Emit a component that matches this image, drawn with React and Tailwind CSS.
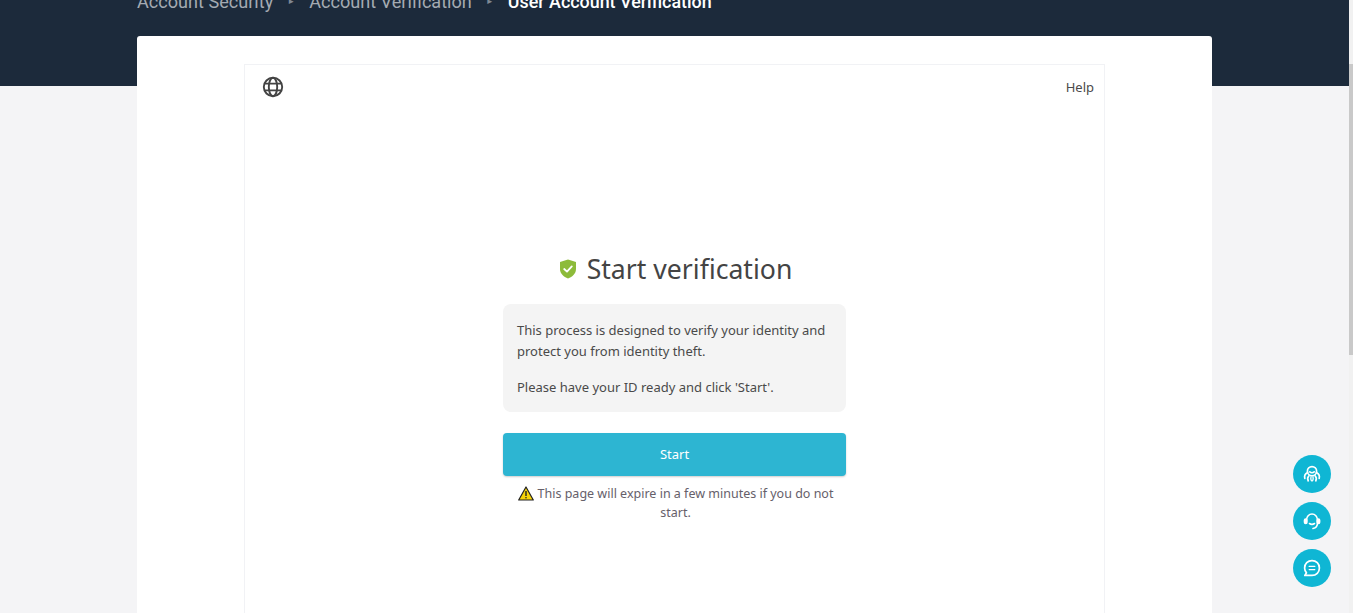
function GlobeIcon() {
  return (
    <svg width="22" height="22" viewBox="0 0 22 22" fill="none" stroke="#444" strokeWidth="1.9">
      <circle cx="11" cy="11" r="9.2" />
      <ellipse cx="11" cy="11" rx="4.2" ry="9.2" />
      <path d="M2.6 7.6 H19.4 M2.6 14.4 H19.4" />
    </svg>
  );
}

function ShieldIcon() {
  return (
    <svg width="18" height="20" viewBox="0 0 18 20">
      <path d="M9 0.5 L17 3 V10 C17 14.5 13.5 17.8 9 19.5 C4.5 17.8 1 14.5 1 10 V3 Z" fill="#8dbb3a" />
      <path d="M5.2 10 L8 12.6 L12.8 7.4" fill="none" stroke="#fff" strokeWidth="1.8" strokeLinecap="round" strokeLinejoin="round" />
    </svg>
  );
}

function WarningIcon() {
  return (
    <svg width="16" height="15" viewBox="0 0 16 15">
      <path d="M8 1 L15.3 14 H0.7 Z" fill="#f7d308" stroke="#222" strokeWidth="1.2" strokeLinejoin="round" />
      <path d="M8 5 V10" stroke="#222" strokeWidth="1.4" />
      <circle cx="8" cy="11.8" r="0.8" fill="#222" />
    </svg>
  );
}

function RoundButton({ children }) {
  return (
    <button className="flex h-[38px] w-[38px] items-center justify-center rounded-full bg-[#0fb6d4]">
      {children}
    </button>
  );
}

export default function App() {
  return (
    <div className="relative h-[613px] overflow-hidden bg-[#f4f4f6] font-['Noto_Sans',sans-serif]">
      <header className="h-[86px] overflow-hidden bg-[#1c2a3b] pl-[137px]">
        <nav className="-mt-[10px] flex items-center font-['Roboto',sans-serif] text-[18.1px] leading-6 text-[#a4aab2]">
          <span>Account Security</span>
          <span className="mx-[14px] text-[8px] text-[#7f8893]">►</span>
          <span>Account Verification</span>
          <span className="mx-[14px] text-[8px] text-[#7f8893]">►</span>
          <span className="text-[17.9px] font-medium text-white">User Account Verification</span>
        </nav>
      </header>

      <main className="-mt-[50px] ml-[137px] h-[600px] w-[1075px] rounded-t-[3px] bg-white px-[107px] pt-[28px]">
        <section className="h-[600px] border border-[#f1f2f5] px-[10px]">
          <div className="flex h-[44px] items-center justify-between pl-[7px]">
            <GlobeIcon />
            <a className="pt-[2px] text-[13px] text-[#4a4a4a]">Help</a>
          </div>

          <div className="mx-auto mt-[141px] w-[343px]">
            <h1 className="flex items-center justify-center gap-[10px] pl-[2px] text-[26.6px] leading-[38px] text-[#444]">
              <ShieldIcon />
              Start verification
            </h1>
            <div className="mt-[16px] rounded-lg bg-[#f4f4f4] px-[14px] pb-[14px] pt-[16px] text-[13px] leading-[21px] text-[#4a4a4a]">
              <p>This process is designed to verify your identity and protect you from identity theft.</p>
              <p className="mt-[15px]">Please have your ID ready and click 'Start'.</p>
            </div>
            <button className="mt-[21px] h-[43px] w-full rounded bg-[#2db5d2] pt-[1px] text-[13px] text-white shadow-[0_1px_2px_rgba(0,0,0,0.2)]">
              Start
            </button>
            <p className="mx-auto mt-[8px] w-[320px] pl-[2px] text-center text-[12.5px] leading-[19px] text-[#66606a]">
              <span className="mr-[4px] inline-block align-[-3px]"><WarningIcon /></span>
              This page will expire in a few minutes if you do not start.
            </p>
          </div>
        </section>
      </main>

      <div className="absolute right-[22px] top-[455px] flex flex-col gap-[9px]">
        <RoundButton>
          <svg width="20" height="20" viewBox="0 0 20 20" fill="none" stroke="#fff" strokeWidth="1.7" strokeLinecap="round">
            <circle cx="10" cy="7.2" r="4.6" />
            <path d="M7.8 7.8 C9 9 11 9 12.2 7.8" />
            <path d="M5.6 8.6 C3.2 9.8 2.2 12 2.8 14.4 M14.4 8.6 C16.8 9.8 17.8 12 17.2 14.4" />
            <path d="M6.8 12 C5.6 13.2 5.4 15 6.2 16.8 M13.2 12 C14.4 13.2 14.6 15 13.8 16.8" />
            <path d="M9 13 C8.6 14.4 8.8 15.6 9.4 16.8 M11 13 C11.4 14.4 11.2 15.6 10.6 16.8" strokeWidth="1.3" />
          </svg>
        </RoundButton>
        <RoundButton>
          <svg width="20" height="20" viewBox="0 0 20 20" fill="none" stroke="#fff" strokeWidth="1.6" strokeLinecap="round">
            <path d="M4.5 9 C4.5 5.5 7 3 10 3 C13 3 15.5 5.5 15.5 9 V12 C15.5 15 13.5 17 11 17.5" />
            <rect x="2.5" y="8" width="2.4" height="4.5" rx="1.2" fill="#fff" />
            <rect x="15.2" y="8" width="2.4" height="4.5" rx="1.2" fill="#fff" />
            <path d="M7.5 12.5 C9 13.5 11 13.5 12.5 12.5" />
          </svg>
        </RoundButton>
        <RoundButton>
          <svg width="20" height="20" viewBox="0 0 20 20" fill="none" stroke="#fff" strokeWidth="1.7" strokeLinecap="round" strokeLinejoin="round">
            <path d="M10 2.6 C14.2 2.6 17.4 5.8 17.4 10 C17.4 14.2 14.2 17.4 10 17.4 H2.8 L4.5 14.8 C3.2 13.4 2.6 11.8 2.6 10 C2.6 5.8 5.8 2.6 10 2.6 Z" />
            <path d="M7.2 8.4 H12.8 M7.2 11.6 H12.8" strokeWidth="1.3" />
          </svg>
        </RoundButton>
      </div>

      <div className="absolute right-0 top-0 h-full w-[4px] bg-[#f1f1f1]">
        <div className="mt-[64px] h-[291px] bg-[#c9c9c9]" />
      </div>
    </div>
  );
}
